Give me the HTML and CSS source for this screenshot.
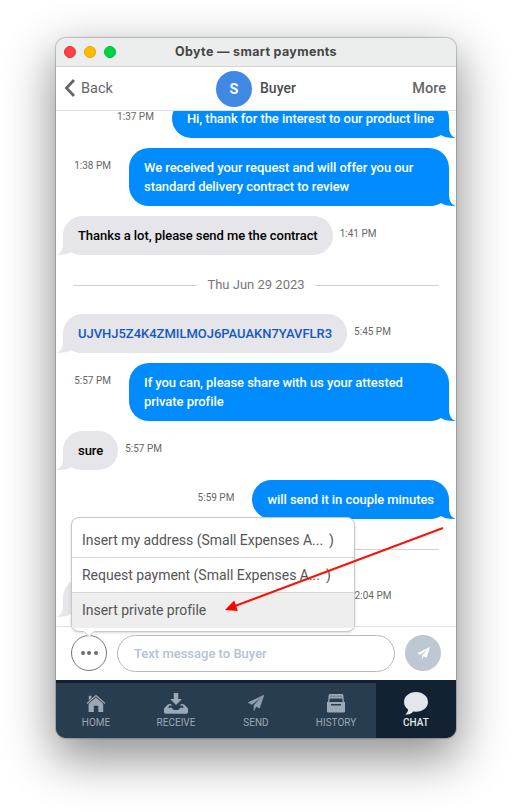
FILE: index.html
```html
<!DOCTYPE html>
<html lang="en">
<head>
<meta charset="utf-8">
<title>Obyte — smart payments</title>
<link rel="stylesheet" href="styles.css">
</head>
<body>
<main class="window">
  <div class="titlebar">
    <span class="light red"></span><span class="light yellow"></span><span class="light green"></span>
    <span class="title">Obyte — smart payments</span>
  </div>
  <header class="header">
    <div class="back">
      <svg width="12" height="20" viewBox="0 0 12 20"><path d="M10 2 2.5 10 10 18" fill="none" stroke="#666" stroke-width="2.8"/></svg>
      <span>Back</span>
    </div>
    <div class="contact"><span class="avatar">S</span><span class="name">Buyer</span></div>
    <div class="more">More</div>
  </header>
  <section class="chat">
    <div class="row sent"><time>1:37 PM</time><p class="bubble">Hi, thank for the interest to our product line</p></div>
    <div class="row sent"><time>1:38 PM</time><p class="bubble wide">We received your request and will offer you our standard delivery contract to review</p></div>
    <div class="row"><p class="bubble">Thanks a lot, please send me the contract</p><time>1:41 PM</time></div>
    <div class="date"><span>Thu Jun 29 2023</span></div>
    <div class="row"><p class="bubble address">UJVHJ5Z4K4ZMILMOJ6PAUAKN7YAVFLR3</p><time>5:45 PM</time></div>
    <div class="row sent"><time>5:57 PM</time><p class="bubble wide">If you can, please share with us your attested private profile</p></div>
    <div class="row"><p class="bubble">sure</p><time>5:57 PM</time></div>
    <div class="row sent"><time>5:59 PM</time><p class="bubble">will send it in couple minutes</p></div>
    <div class="date"><span class="covered"></span></div>
    <div class="row"><p class="bubble last"></p><time>12:04 PM</time></div>
  </section>
  <footer class="composer">
    <div class="dots"><i></i><i></i><i></i></div>
    <div class="input">Text message to Buyer</div>
    <div class="submit"><svg width="13" height="13" viewBox="0 0 18 18"><path d="M18 0 0 8.5 4.6 10.6 15 3 6.8 11.6V18L9.2 12.8 13.4 15Z" fill="#fff"/></svg></div>
  </footer>
  <nav class="tabs">
    <div class="tab">
      <svg width="20" height="20" viewBox="0 0 20 20"><path d="M1 10.4 10 2.6 19 10.4" fill="none" stroke="#9ba8b6" stroke-width="1.3"/><path d="M2.8 2.7H5.4V5L2.8 7.3ZM10 4.6 17.2 10.8V19H12.3V12.7H7.8V19H2.6V10.8Z" fill="#9ba8b6"/></svg>
      <span>HOME</span>
    </div>
    <div class="tab">
      <svg width="24" height="21" viewBox="0 0 24 21"><path d="M9.8 0H14.2V6H18L12 12 6.2 6H9.8Z" fill="#9ba8b6"/><path d="M4.2 11.2 7 11 8 12.4H5.5L4 14.8H7.5C8.5 14.8 8.3 17 10 17H14C15.7 17 15.5 14.8 16.5 14.8H20L18.5 12.4H16L17 11 19.8 11.2 24 15.5V19Q24 20.7 22.3 20.7H1.7Q0 20.7 0 19V15.5Z" fill="#9ba8b6"/></svg>
      <span>RECEIVE</span>
    </div>
    <div class="tab">
      <svg width="18" height="18" viewBox="0 0 18 18"><path d="M17 1 1 8.6 5 10.6 14 3.6 6.9 11.4V16.7L9.2 12.4 12.5 14.3Z" fill="#8f9eac" stroke="#8f9eac" stroke-width=".4"/></svg>
      <span>SEND</span>
    </div>
    <div class="tab">
      <svg width="18" height="20" viewBox="0 0 18 20"><path d="M3 1H15Q16.3 1 16.3 2.2L17 9H1L1.7 2.2Q1.7 1 3 1Z" fill="#9ba8b6"/><path d="M3 3.2H15" stroke="#5e7182" stroke-width=".8"/><path d="M2.7 5.5H15.3L15.8 9H2.2Z" fill="#293d50"/><path d="M0 9H18V18.3Q18 19.5 16.8 19.5H1.2Q0 19.5 0 18.3Z" fill="#9ba8b6"/><path d="M4 11.8H14" stroke="#293d50" stroke-width="1.5"/></svg>
      <span>HISTORY</span>
    </div>
    <div class="tab active">
      <svg width="24" height="23" viewBox="0 0 24 23"><path d="M12 0C18.8 0 24 4.4 24 10S18.8 19.7 12 19.7L9.2 19.5C7.6 21.8 4.6 23 1.2 22.3 2.9 21.2 4 19.4 4.1 17.4 1.5 15.6 0 13 0 10 0 4.4 5.2 0 12 0Z" fill="#e1e7eb"/></svg>
      <span>CHAT</span>
    </div>
  </nav>
  <div class="menu">
    <div class="item first">Insert my address (Small Expenses A...<b>)</b></div>
    <div class="item">Request payment (Small Expenses A...<b>)</b></div>
    <div class="item selected">Insert private profile</div>
    <svg class="pointer" width="14" height="8" viewBox="0 0 14 8"><path d="M0 0V2L2 2 7 7 12 2H14V0Z" fill="#fff"/><path d="M0 1.5H2L7 6.5 12 1.5H14" fill="none" stroke="#c8c8c8"/></svg>
  </div>
  <svg class="arrow" width="220" height="86" viewBox="0 0 220 86"><path d="M218 2 10 80" stroke="#ff1000" stroke-width="1.9"/><path d="M0 84 9.2 74.6 12.8 84.9Z" fill="#ff0000"/></svg>
</main>
</body>
</html>
```

FILE: styles.css
```css
* { box-sizing: border-box; }
body {
  margin: 0;
  height: 812px;
  padding: 38px 56px;
  background: #fff;
  overflow: hidden;
  font-family: Roboto, "Liberation Sans", sans-serif;
}
.window {
  position: relative;
  display: flex;
  flex-direction: column;
  width: 400px;
  height: 700px;
  border-radius: 10px;
  background: #fff;
  box-shadow: 0 0 1px 1px rgba(0,0,0,.2), 0 18px 48px 3px rgba(0,0,0,.44);
}
.titlebar {
  position: relative;
  display: flex;
  align-items: center;
  gap: 8px;
  height: 29px;
  padding: 0 8px 1px;
  background: #eceeed;
  border-bottom: 1px solid #d5d6d6;
  border-radius: 10px 10px 0 0;
}
.light { width: 12px; height: 12px; border-radius: 50%; border: 1px solid; }
.red { background: #ff4245; border-color: #e92e32; }
.yellow { background: #ffbb00; border-color: #e8a300; }
.green { background: #00d540; border-color: #00bc36; }
.title {
  position: absolute;
  inset: 0;
  text-align: center;
  font: 700 12.5px/28px Inter, sans-serif;
  letter-spacing: .33px;
  color: #454646;
}
.header {
  display: grid;
  grid-template-columns: 160px 1fr auto;
  align-items: center;
  height: 44px;
  padding-right: 10px;
  border-bottom: 1px solid #dfdfdf;
  font-size: 14.5px;
  color: #666;
}
.back { display: flex; align-items: center; gap: 5px; padding: 0 0 2px 8px; }
.back span { padding-top: 2px; }
.contact { display: flex; align-items: center; gap: 8px; }
.avatar {
  width: 36px;
  height: 36px;
  border-radius: 50%;
  background: #3f89e5;
  color: #fff;
  font-weight: 700;
  line-height: 37px;
  text-align: center;
}
.name { padding-bottom: 1px; color: #4d4d4d; font-size: 14px; font-weight: 500; }
.more { font-weight: 500; }
.chat {
  display: flex;
  flex-direction: column;
  justify-content: flex-end;
  gap: 10px;
  height: 515px;
  padding: 0 7px 9px;
  overflow: hidden;
}
.row { display: flex; flex: none; align-items: flex-start; }
.sent { justify-content: flex-end; }
.row time {
  margin: 11px 0 0 7px;
  font-size: 10px;
  line-height: 14px;
  color: #666;
  white-space: nowrap;
}
.sent time { margin: 11px 18px 0 0; }
.bubble {
  position: relative;
  isolation: isolate;
  min-height: 39px;
  margin: 0;
  padding: 10px 15px;
  border-radius: 20px;
  background: #e5e5ea;
  color: #000;
  font-size: 13px;
  font-weight: 500;
  line-height: 19px;
  letter-spacing: -.055px;
}
.sent .bubble { background: #008cff; color: #fff; }
.bubble::after {
  content: "";
  position: absolute;
  z-index: -1;
  left: -7px;
  bottom: 0;
  width: 27px;
  height: 20px;
  background: inherit;
  clip-path: path("M27 0H7V9C7 15 4 19 0 20C7 20.3 12 19 15 17C18 19 22 20 27 20Z");
}
.sent .bubble::after { left: auto; right: -7px; transform: scaleX(-1); }
.wide { width: 320px; }
.address { color: #1558c0; letter-spacing: -.02px; }
.last { width: 279px; }
.date {
  display: flex;
  flex: none;
  align-items: center;
  gap: 10px;
  height: 39px;
  padding: 0 10px;
  font-size: 13px;
  color: #777;
}
.date::before, .date::after { content: ""; flex: 1; height: 1px; margin-top: 2px; background: #d2d2d2; }
.covered { width: 97px; }
.composer {
  display: flex;
  align-items: center;
  height: 54px;
  padding: 0 15px 1px;
  border-top: 1px solid #e0e0e0;
}
.dots {
  display: flex;
  align-items: center;
  justify-content: center;
  gap: 2.5px;
  width: 36px;
  height: 36px;
  border: 1px solid #777;
  border-radius: 50%;
}
.dots i { width: 4px; height: 4px; border-radius: 50%; background: #6d6d6d; }
.input {
  width: 278px;
  height: 37px;
  margin: 0 10px;
  padding-left: 16px;
  border: 1px solid #b9b9b9;
  border-radius: 19px;
  color: #b5c2cf;
  font-size: 13px;
  font-weight: 500;
  line-height: 36px;
}
.submit {
  display: flex;
  align-items: center;
  justify-content: center;
  width: 36px;
  height: 36px;
  border-radius: 50%;
  background: #bec8d2;
}
.tabs {
  display: grid;
  grid-template-columns: repeat(5, 1fr);
  height: 58px;
  padding-top: 3px;
  background: #122232;
  border-radius: 0 0 10px 10px;
  overflow: hidden;
}
.tab {
  display: grid;
  grid-template-rows: 33px 14px;
  justify-items: center;
  align-items: center;
  align-content: start;
  background: #293d50;
  color: #9ba8b6;
  font-size: 10px;
  line-height: 14px;
}
.tab svg { margin-top: 7px; }
.active { background: #122232; color: #e1e7eb; font-weight: 500; }
.menu {
  position: absolute;
  left: 15px;
  top: 479px;
  width: 284px;
  height: 115px;
  padding-top: 5px;
  border: 1px solid #c8c8c8;
  border-radius: 8px;
  background: #fff;
  box-shadow: 0 1px 3px rgba(0,0,0,.15);
  color: #555;
  font-size: 14px;
  letter-spacing: -.02px;
}
.item { height: 35px; padding-left: 10px; border-top: 1px solid #d5d5d5; line-height: 34px; white-space: nowrap; }
.first { border-top: 0; line-height: 35px; height: 34px; }
.item b { margin-left: 6px; font-weight: 400; }
.selected { height: 36px; background: #eee; }
.pointer { position: absolute; left: 10px; top: 112px; }
.arrow { position: absolute; left: 169px; top: 488px; }
```
